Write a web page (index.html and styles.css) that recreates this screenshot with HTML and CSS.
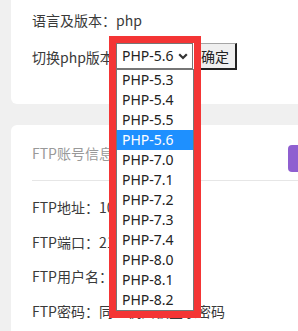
FILE: index.html
```html
<!DOCTYPE html>
<html lang="zh-CN">

<head>
    <meta charset="UTF-8">
    <meta name="viewport" content="width=device-width, initial-scale=1.0">
    <title>PHP版本</title>
    <link rel="stylesheet" href="styles.css">
</head>

<body>
    <div class="card card-top">
        <div class="line">语言及版本：php</div>
        <div class="line switch-row">
            <span class="label">切换php版本</span>
            <div class="select-wrap">
                <div class="select">
                    <span>PHP-5.6</span>
                    <svg class="chevron" width="10" height="7" viewBox="0 0 10 7">
                        <path d="M1.2 1.2 L5 5 L8.8 1.2" fill="none" stroke="#333" stroke-width="2.2" />
                    </svg>
                </div>
                <ul class="options">
                    <li>PHP-5.3</li>
                    <li>PHP-5.4</li>
                    <li>PHP-5.5</li>
                    <li class="active">PHP-5.6</li>
                    <li>PHP-7.0</li>
                    <li>PHP-7.1</li>
                    <li>PHP-7.2</li>
                    <li>PHP-7.3</li>
                    <li>PHP-7.4</li>
                    <li>PHP-8.0</li>
                    <li>PHP-8.1</li>
                    <li>PHP-8.2</li>
                </ul>
                <div class="highlight-box"></div>
            </div>
            <button class="ok-btn">确定</button>
        </div>
    </div>

    <div class="card card-ftp">
        <div class="ftp-head">
            <span class="ftp-title">FTP账号信息</span>
            <span class="purple-btn"></span>
        </div>
        <div class="ftp-body">
            <div class="line">FTP地址：103.45.67.89</div>
            <div class="line">FTP端口：21</div>
            <div class="line">FTP用户名：ftp_user01</div>
            <div class="line">FTP密码：同主机面板登录密码</div>
        </div>
    </div>
</body>

</html>
```

FILE: styles.css
```css
body {
    margin: 0;
    background-color: #f0f0f0;
    font-family: "Noto Sans CJK SC", sans-serif;
    font-size: 14px;
    color: #3a3a3a;
    overflow: hidden;
}

.card {
    background-color: #fff;
    margin-left: 11px;
    margin-right: -20px;
    border-radius: 6px;
}

.card-top {
    margin-top: -10px;
    padding: 20px 0 34px 21px;
}

.line {
    height: 20px;
    line-height: 20px;
    white-space: nowrap;
}

.switch-row {
    display: flex;
    align-items: center;
    height: 27px;
    margin-top: 13px;
}

.label {
    width: 84px;
}

.select-wrap {
    position: relative;
    width: 77px;
    height: 26px;
    align-self: flex-start;
}

.select {
    box-sizing: border-box;
    height: 26px;
    border: 1px solid #767676;
    display: flex;
    align-items: center;
    justify-content: space-between;
    padding: 0 4px 0 5px;
    font-family: "Noto Sans", sans-serif;
    font-size: 14px;
    color: #222;
    background: #fff;
}

.chevron {
    margin-top: 1px;
}

.options {
    position: absolute;
    top: 26px;
    left: 0;
    width: 78px;
    box-sizing: border-box;
    margin: 0;
    padding: 0;
    list-style: none;
    border: 1px solid #767676;
    background: #fff;
    font-family: "Noto Sans", sans-serif;
    font-size: 14px;
    color: #222;
    z-index: 2;
}

.options li {
    height: 20px;
    line-height: 20px;
    padding-left: 5px;
}

.options li.active {
    background-color: #1e90ff;
    color: #fff;
}

.highlight-box {
    position: absolute;
    left: -7px;
    top: -7px;
    width: 92px;
    height: 282px;
    box-sizing: border-box;
    border: 7px solid #f43535;
    z-index: 3;
}

.ok-btn {
    margin-left: 1px;
    height: 27px;
    padding: 0 6px;
    align-self: flex-start;
    background-color: #efefef;
    border-top: 1px solid #a5a5a5;
    border-left: 1px solid #a5a5a5;
    border-right: 2px solid #222;
    border-bottom: 2px solid #222;
    font-family: "Noto Sans CJK SC", sans-serif;
    font-size: 14px;
    color: #222;
}

.card-ftp {
    margin-top: 21px;
    padding: 0 0 40px 21px;
}

.ftp-head {
    display: flex;
    justify-content: space-between;
    align-items: flex-start;
    height: 55px;
    border-bottom: 1px solid #e6e6e6;
}

.ftp-title {
    margin-top: 18px;
    line-height: 20px;
    color: #999;
}

.purple-btn {
    margin-top: 20px;
    width: 30px;
    height: 27px;
    border-radius: 4px;
    background-color: #8f5fd0;
}

.ftp-body {
    padding-top: 16px;
}

.ftp-body .line {
    margin-bottom: 14.5px;
}
```
